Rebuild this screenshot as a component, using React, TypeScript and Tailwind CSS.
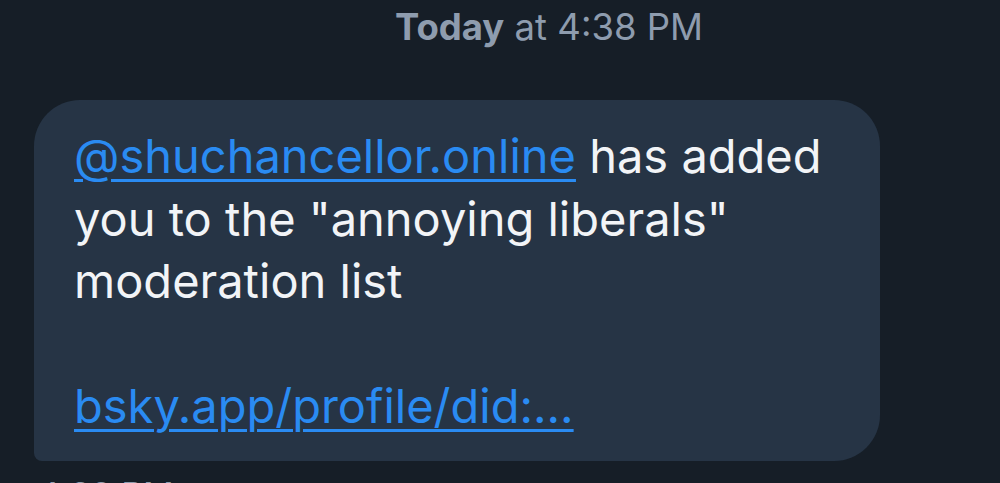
export default function App() {
    return (
        <div className="w-[1000px] h-[483px] overflow-hidden bg-[#161e27] font-['Inter',sans-serif]">
            <div className="flex justify-center pl-[98px] pt-[5px] h-[100px]">
                <p className="text-[36.5px] leading-[44px] text-[#8e9cae]">
                    <span className="font-bold">Today</span> at 4:38 PM
                </p>
            </div>
            <div className="ml-[34px] w-[846px] h-[361px] bg-[#263445] rounded-[46px] rounded-bl-[8px] pl-[40px] pr-[30px] pt-[25px]">
                <p className="text-[47px] leading-[62.5px] text-[#f2f4f7]">
                    <a className="text-[#2a8bf2] underline underline-offset-[6px] decoration-[3px]" href="#">@shuchancellor.online</a> has added
                    <br />
                    you to the "annoying liberals"
                    <br />
                    moderation list
                    <br />
                    <br />
                    <a className="text-[#2a8bf2] underline underline-offset-[6px] decoration-[3px]" href="#">bsky.app/profile/did:...</a>
                </p>
            </div>
            <p className="ml-[38px] mt-[12px] text-[34px] leading-[44px] text-[#8e9cae]">4:38 PM</p>
        </div>
    )
}
